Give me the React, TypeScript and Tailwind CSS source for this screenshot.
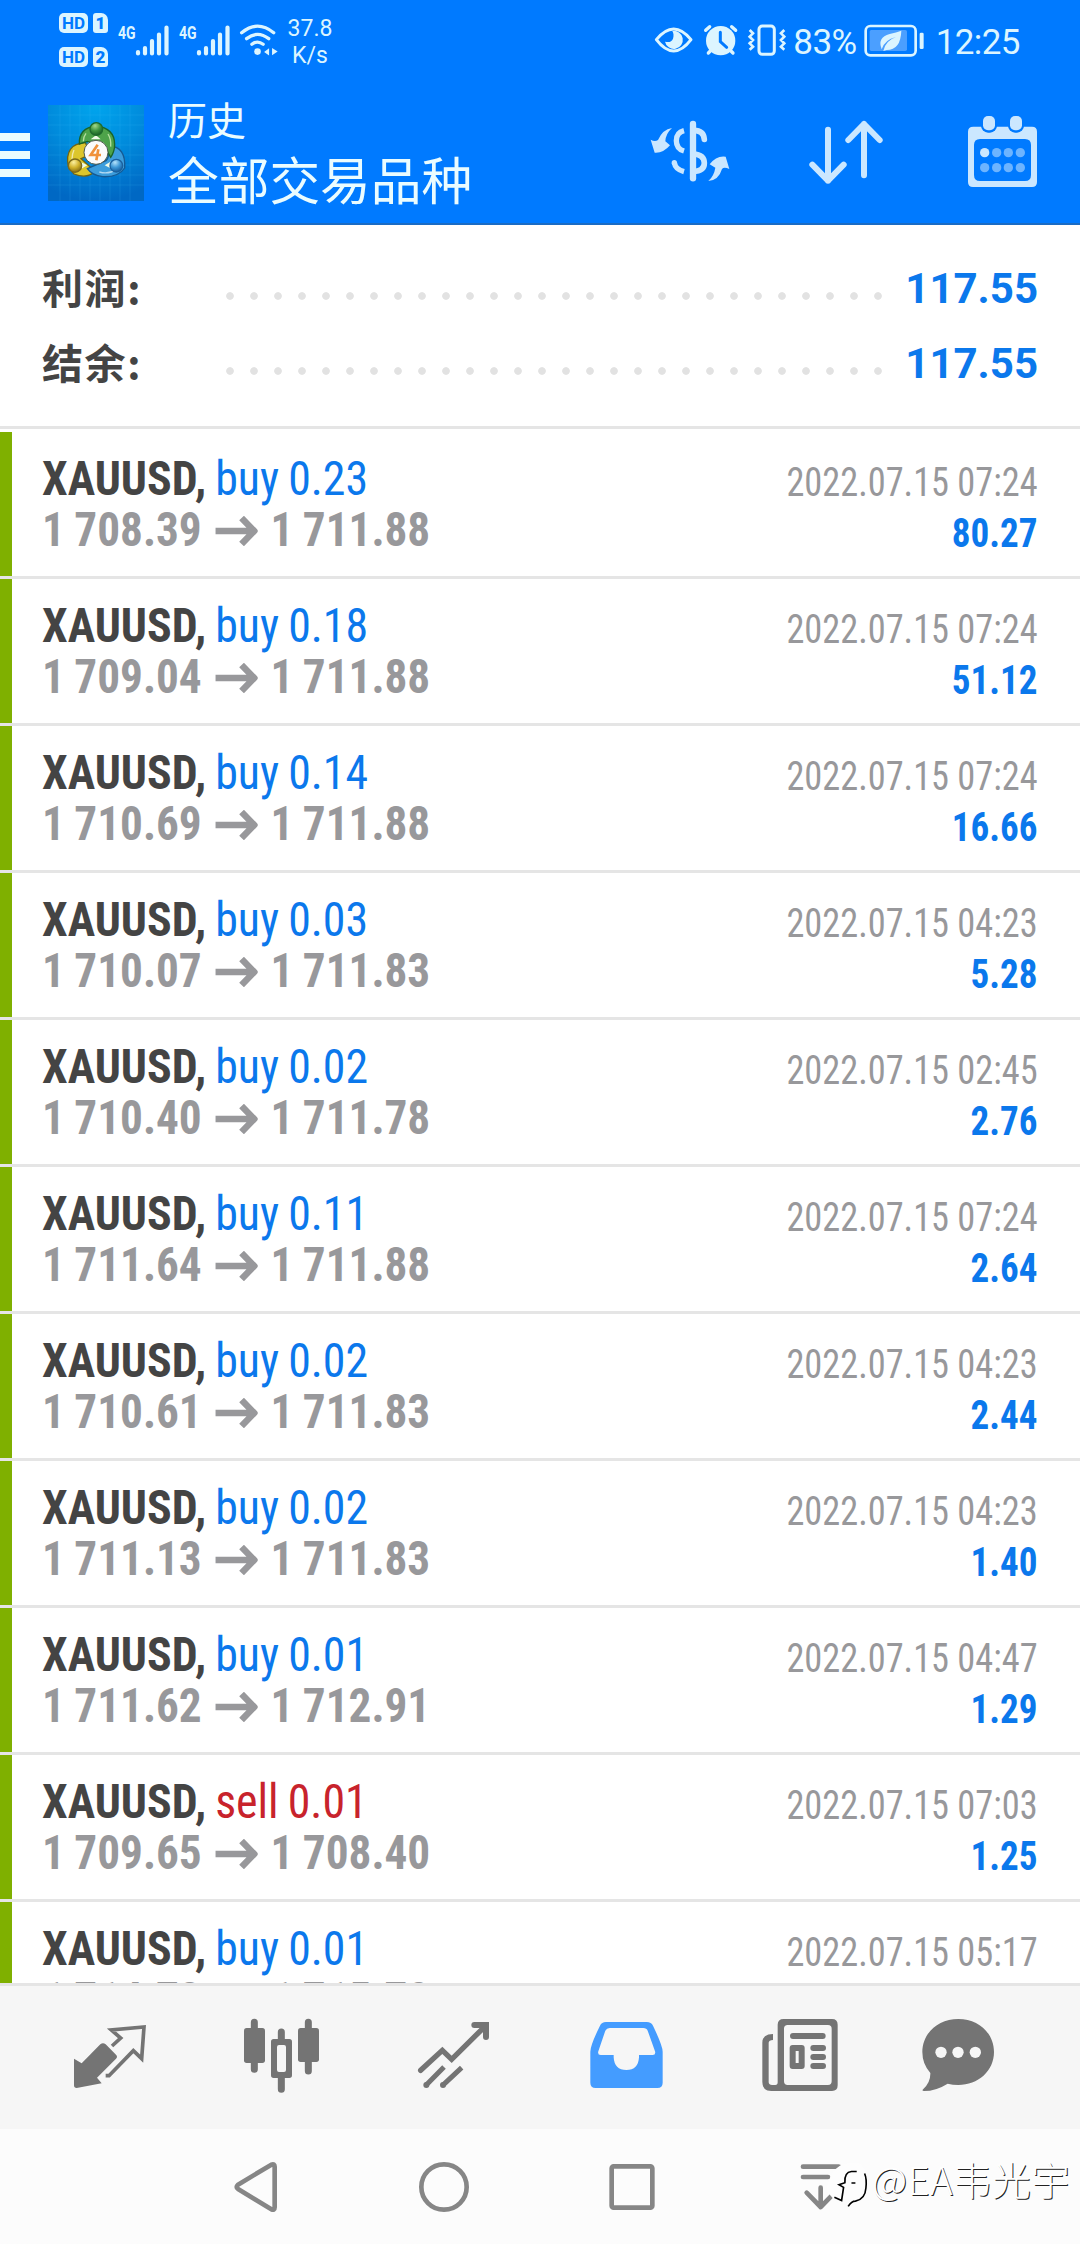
import type { ReactNode } from 'react';

type Deal = {
  side: 'buy' | 'sell';
  volume: string;
  open: string;
  close: string;
  time: string;
  profit: string;
};

const deals: Deal[] = [
  { side: 'buy', volume: '0.23', open: '1 708.39', close: '1 711.88', time: '2022.07.15 07:24', profit: '80.27' },
  { side: 'buy', volume: '0.18', open: '1 709.04', close: '1 711.88', time: '2022.07.15 07:24', profit: '51.12' },
  { side: 'buy', volume: '0.14', open: '1 710.69', close: '1 711.88', time: '2022.07.15 07:24', profit: '16.66' },
  { side: 'buy', volume: '0.03', open: '1 710.07', close: '1 711.83', time: '2022.07.15 04:23', profit: '5.28' },
  { side: 'buy', volume: '0.02', open: '1 710.40', close: '1 711.78', time: '2022.07.15 02:45', profit: '2.76' },
  { side: 'buy', volume: '0.11', open: '1 711.64', close: '1 711.88', time: '2022.07.15 07:24', profit: '2.64' },
  { side: 'buy', volume: '0.02', open: '1 710.61', close: '1 711.83', time: '2022.07.15 04:23', profit: '2.44' },
  { side: 'buy', volume: '0.02', open: '1 711.13', close: '1 711.83', time: '2022.07.15 04:23', profit: '1.40' },
  { side: 'buy', volume: '0.01', open: '1 711.62', close: '1 712.91', time: '2022.07.15 04:47', profit: '1.29' },
  { side: 'sell', volume: '0.01', open: '1 709.65', close: '1 708.40', time: '2022.07.15 07:03', profit: '1.25' },
  { side: 'buy', volume: '0.01', open: '1 714.73', close: '1 715.78', time: '2022.07.15 05:17', profit: '1.05' },
];

const summary = [
  { label: '利润:', value: '117.55' },
  { label: '结余:', value: '117.55' },
];

function SimBadge({ slot }: { slot: string }) {
  return (
    <div className="flex h-5 gap-[5px] text-[#007aff]">
      <span className="flex h-5 w-[29px] items-center justify-center rounded-[5px] bg-[#dcf5ff] text-[17px] leading-none font-bold">
        HD
      </span>
      <span className="flex h-5 w-[15px] items-center justify-center rounded-[3px] rounded-tr-[7px] bg-[#dcf5ff] text-[17px] leading-none font-black">
        {slot}
      </span>
    </div>
  );
}

function Signal() {
  return (
    <div className="relative h-[31px] w-[51px]">
      <span className="absolute top-0 left-0 origin-left scale-x-[0.78] text-[18px] leading-[15px] font-bold">4G</span>
      <svg viewBox="0 0 51 31" className="h-[31px] w-[51px]" stroke="currentColor" strokeWidth="4.2" strokeLinecap="round">
        <path d="M20 27v1.5M27 23v5.5M34 16v12.5M41 9.500v19M48.500 2.500v26" />
      </svg>
    </div>
  );
}

function StatusBar() {
  return (
    <div className="relative flex h-[88px] items-start font-[Roboto] text-[#dcf5ff]">
      <div className="mt-[13px] ml-[59px] flex flex-col gap-[14px]">
        <SimBadge slot="1" />
        <SimBadge slot="2" />
      </div>
      <div className="mt-[25px] ml-[10px] flex gap-[10px]">
        <Signal />
        <Signal />
      </div>
      <svg viewBox="712 66 124 105" className="mt-[22px] ml-[8px] h-[35px] w-[41px]" fill="none" stroke="currentColor" strokeWidth="10" strokeLinecap="round">
        <path d="M723 98Q771 58 820 98M738 116Q771 90 805 116M754 133Q771 120 788 133" />
        <circle cx="771" cy="155" r="10" fill="currentColor" stroke="none" />
        <path d="M791 156l15-11v22zM815 144v22l17-11z" fill="currentColor" stroke="none" />
      </svg>
      <div className="mt-[15px] ml-[7px] w-[48px] text-center text-[23px] leading-[27px] whitespace-nowrap">
        <div>37.8</div>
        <div>K/s</div>
      </div>
      <svg viewBox="40 66 400 110" className="mt-[22px] ml-[319px] h-[36.67px] w-[133.33px]" fill="none" stroke="currentColor">
        <path d="M50 119Q102 55 154 119Q102 187 50 119z" strokeWidth="9" strokeLinejoin="round" />
        <path d="M98 93a27 27 0 1 1-22 32q18 5 24-9q4-13-2-23z" fill="currentColor" stroke="none" />
        <circle cx="243" cy="122" r="44" fill="currentColor" stroke="none" />
        <path d="M242 97v28l19 17" stroke="#007aff" strokeWidth="9" strokeLinecap="round" />
        <path d="M198 91l12-11M288 91l-12-11M206 159l9-9M280 159l-9-9" strokeWidth="10" strokeLinecap="round" />
        <rect x="358" y="78" width="46" height="85" rx="10" strokeWidth="9" />
        <path d="M330 90l10 10-10 10 10 10-10 10 10 10-10 9M434 90l-10 10 10 10-10 10 10 10-10 10 10 9" strokeWidth="8" />
      </svg>
      <span className="mt-[23px] ml-[7px] w-[70px] text-[35px] leading-[40px] tracking-[-0.6px]">83%</span>
      <svg viewBox="670 66 190 110" className="mt-[22px] h-[36.67px] w-[63.33px]" fill="none" stroke="currentColor">
        <rect x="678" y="78" width="150" height="88" rx="14" strokeWidth="8" />
        <rect x="690" y="90" width="112" height="63" rx="5" fill="#4b9fff" stroke="none" />
        <rect x="840" y="98" width="12" height="49" rx="4" fill="currentColor" stroke="none" />
        <path d="M785 92q-2 58-44 58l-10 3q6-31 38-42q-34 8-43 37q-14-36 24-46q20-4 35-10z" fill="currentColor" stroke="none" />
      </svg>
      <span className="mt-[23px] ml-[9px] text-[35px] leading-[40px] tracking-[-0.6px]">12:25</span>
    </div>
  );
}

function AppLogo() {
  return (
    <svg viewBox="144 315 288 288" className="h-24 w-24">
      <defs>
        <radialGradient id="sky" cx="0.5" cy="0" r="1">
          <stop offset="0" stopColor="#00a5ee" />
          <stop offset="0.5" stopColor="#008bdc" />
          <stop offset="1" stopColor="#0068c4" />
        </radialGradient>
        <radialGradient id="greenHead" cx="0.4" cy="0.25" r="0.8">
          <stop offset="0" stopColor="#a6d98a" />
          <stop offset="0.5" stopColor="#3f9440" />
          <stop offset="1" stopColor="#145a22" />
        </radialGradient>
        <radialGradient id="goldHead" cx="0.4" cy="0.25" r="0.8">
          <stop offset="0" stopColor="#fbf0a0" />
          <stop offset="0.5" stopColor="#d2b32c" />
          <stop offset="1" stopColor="#7a6410" />
        </radialGradient>
        <radialGradient id="blueHead" cx="0.4" cy="0.25" r="0.8">
          <stop offset="0" stopColor="#b4e2fb" />
          <stop offset="0.5" stopColor="#3d97d6" />
          <stop offset="1" stopColor="#125596" />
        </radialGradient>
      </defs>
      <rect x="144" y="315" width="288" height="288" fill="url(#sky)" />
      <path
        d="M180 315v288M210 315v288M240 315v288M270 315v288M300 315v288M330 315v288M360 315v288M390 315v288M144 345h288M144 375h288M144 405h288M144 435h288M144 465h288M144 495h288M144 525h288M144 555h288"
        stroke="#4cc2f5"
        strokeOpacity="0.22"
        strokeWidth="2"
      />
      <g strokeWidth="4">
        <path d="M205 500Q192 432 256 428L272 462L243 476L285 514Q262 538 222 522Z" fill="#dcc62c" stroke="#6f6415" />
        <path d="M262 506L318 482Q330 470 328 438Q378 440 374 504Q356 532 308 530Q276 526 262 506Z" fill="#3c9ddc" stroke="#155a94" />
        <path d="M238 432Q236 384 288 378Q344 384 344 434Q344 454 332 472L314 440L262 424Z" fill="#4ea34a" stroke="#1b6428" />
        <path d="M258 400Q250 410 250 424M324 402Q334 418 332 440" fill="none" stroke="#b5dfa0" />
        <path d="M222 450Q216 462 216 478M298 516Q326 524 350 508" fill="none" stroke="#fff" strokeOpacity="0.6" />
        <path d="M272 418l16-12l14 12zM238 484l6 22l18-10zM334 484l-4 20l-16-8z" fill="#effbe8" stroke="none" />
        <circle cx="289" cy="387" r="19" fill="url(#greenHead)" stroke="#1f6a2c" />
        <circle cx="225" cy="497" r="20" fill="url(#goldHead)" stroke="#7b6a1b" />
        <circle cx="349" cy="497" r="19" fill="url(#blueHead)" stroke="#1a609e" />
      </g>
      <circle cx="288" cy="457" r="36" fill="#fbfbfb" stroke="#4d5a4c" strokeWidth="3" />
      <path d="M293 434L272 465H303M295 448L289 481" fill="none" stroke="#f0913c" strokeWidth="8" />
    </svg>
  );
}

function HeaderBar() {
  return (
    <div className="flex h-[135px] items-start font-['Noto_Sans_CJK_SC',sans-serif] text-[#eafcff]">
      <div className="mt-[45px] flex w-[30px] flex-col gap-[10px]">
        <span className="h-2 bg-current" />
        <span className="h-2 bg-current" />
        <span className="h-2 bg-current" />
      </div>
      <div className="mt-[17px] ml-[18px]">
        <AppLogo />
      </div>
      <div className="ml-[24px] w-[482px]">
        <div className="mt-[5px] text-[39px] leading-[50px]">历史</div>
        <div className="mt-[5px] text-[50.7px] leading-[60px]">全部交易品种</div>
      </div>
      <svg viewBox="30 354 243 201" className="mt-[30px] h-[67px] w-[81px]" fill="none" stroke="#cbe7ff">
        <path d="M159 372V535" strokeWidth="19" strokeLinecap="round" />
        <path d="M159 391Q191 390 193 418M159 462Q193 464 193 489Q193 514 159 514" strokeWidth="17" strokeLinecap="round" />
        <path d="M132 392Q109 398 109 422Q109 446 132 453M103 488Q106 508 132 515" strokeWidth="16" />
        <circle cx="103" cy="488" r="8" fill="#cbe7ff" stroke="none" />
        <path d="M96 384Q77 401 76 424L90 436Q70 460 44 458L32 419Q45 427 54 420Q68 388 96 384z" fill="#cbe7ff" stroke="none" />
        <path d="M205 543Q222 528 226 503L209 493Q229 466 257 470L268 507Q252 500 246 507Q236 541 205 543z" fill="#cbe7ff" stroke="none" />
      </svg>
      <svg viewBox="504 354 228 201" className="mt-[30px] ml-[77px] h-[67px] w-[76px]" fill="none" stroke="#cbe7ff" strokeWidth="18" strokeLinecap="round" strokeLinejoin="round">
        <path d="M564 389V542M517 494L564 542L611 494M672 526V372M625 420L672 372L719 420" />
      </svg>
      <svg viewBox="981 345 213 219" className="mt-[27px] ml-[83px] h-[73px] w-[71px]">
        <path d="M1000 380H1176Q1191 380 1191 395V546Q1191 561 1176 561H999Q984 561 984 546V395Q984 380 1000 380zM1020 417Q1002 417 1002 435V525Q1002 543 1020 543H1155Q1173 543 1173 525V435Q1173 417 1155 417z" fill="#cbe7ff" fillRule="evenodd" />
        <rect x="1023" y="342" width="48" height="56" rx="21" fill="#007aff" />
        <rect x="1104" y="342" width="48" height="56" rx="21" fill="#007aff" />
        <rect x="1029" y="348" width="36" height="43" rx="15" fill="#cbe7ff" />
        <rect x="1110" y="348" width="36" height="43" rx="15" fill="#cbe7ff" />
        <g fill="#6db4ff">
          <circle cx="1034" cy="458" r="14" fill="#cbe7ff" />
          <circle cx="1070" cy="458" r="14" />
          <circle cx="1105" cy="458" r="14" />
          <circle cx="1141" cy="458" r="14" />
          <circle cx="1034" cy="503" r="14" />
          <circle cx="1070" cy="503" r="14" />
          <circle cx="1105" cy="503" r="14" />
          <circle cx="1141" cy="503" r="14" />
        </g>
      </svg>
    </div>
  );
}

function Summary() {
  return (
    <section className="h-[204px] shrink-0 border-b-[3px] border-[#e5e5e5] bg-white pt-[27px]">
      {summary.map((line) => (
        <div key={line.label} className="flex h-[75px] items-start pr-[42px] pl-[42px] font-bold">
          <span className="-mt-[3px] w-[176px] font-['Noto_Sans_CJK_SC',sans-serif] text-[41px] leading-[75px] tracking-[1.6px] text-[#444]">
            {line.label}
          </span>
          <span className="mt-[38px] h-3 w-[672px] bg-[radial-gradient(circle,#e2e2e2_3.4px,transparent_4.2px)] bg-[length:24px_12px]" />
          <span className="-mt-[1px] flex-1 text-right font-[Roboto] text-[42px] leading-[75px] text-[#0b78ec]">{line.value}</span>
        </div>
      ))}
    </section>
  );
}

function DealRow({ deal }: { deal: Deal }) {
  return (
    <li className="relative h-[147px] shrink-0 border-b-[3px] border-[#e5e5e5] pt-[21px]">
      <span className="absolute top-0 left-0 h-[144px] w-3 bg-[#7fb000]" />
      <div className="flex justify-between pr-[42px] pl-[42px] leading-[51px] whitespace-nowrap">
        <div className="text-[48px]">
          <div className="origin-left scale-x-[0.955] [word-spacing:-1.500px]">
            <b className="text-[#444]">XAUUSD,</b>{' '}
            <span className={deal.side === 'buy' ? 'text-[#0b78ec]' : 'text-[#c8232c]'}>
              {deal.side} {deal.volume}
            </span>
          </div>
          <div className="flex origin-left scale-x-[0.942] items-center font-bold [word-spacing:-1px] text-[#98989b]">
            {deal.open}
            <svg viewBox="0 0 42 30" preserveAspectRatio="none" className="mx-[14px] mt-[2px] h-[30px] w-[45px]" fill="none" stroke="currentColor" strokeWidth="6.500">
              <path d="M0 15h38M26 2l12.500 13L26 28" />
            </svg>
            {deal.close}
          </div>
        </div>
        <div className="mt-[4px] text-right text-[40px] text-[#98989b]">
          <div className="origin-right scale-x-[0.908]">{deal.time}</div>
          <div className="origin-right scale-x-[0.927] font-bold text-[#0b78ec]">{deal.profit}</div>
        </div>
      </div>
    </li>
  );
}

function Tab({ origin, active, children }: { origin: number; active?: boolean; children: ReactNode }) {
  return (
    <button type="button" className={active ? 'h-[143px] w-[172px] text-[#449cff]' : 'h-[143px] w-[172px] text-[#747474]'}>
      <svg viewBox={`${origin} -42 516 429`} className="h-[143px] w-[172px]" fill="none" stroke="currentColor">
        {children}
      </svg>
    </button>
  );
}

function TabBar() {
  return (
    <nav className="flex h-[146px] shrink-0 border-t-[3px] border-[#e5e5e5] bg-[#f6f6f6] px-6">
      <Tab origin={-108}>
        <path d="M42 176L65 190L121 133Q129 126 137 133L168 164Q174 170 168 176L111 233L125 250L50 264Q42 264 42 256z" fill="currentColor" stroke="none" />
        <path d="M156 138L182 114L154 90L252 81L245 176L220 152L147 227L137 227" strokeWidth="11" />
      </Tab>
      <Tab origin={408}>
        <path d="M583 67V208M745 67V213M664 96V120M664 230V268" strokeWidth="21" strokeLinecap="round" />
        <rect x="552" y="84" width="63" height="105" rx="8" fill="currentColor" stroke="none" />
        <rect x="714" y="84" width="63" height="102" rx="8" fill="currentColor" stroke="none" />
        <path d="M641 117H688Q696 117 696 125V226Q696 234 688 234H641Q633 234 633 226V125Q633 117 641 117zM657 135Q651 135 651 141V210Q651 216 657 216H672Q678 216 678 210V141Q678 135 672 135z" fill="currentColor" fillRule="evenodd" stroke="none" />
      </Tab>
      <Tab origin={924}>
        <path d="M1082 211L1147 151L1175 178L1278 76" strokeWidth="16" strokeLinecap="round" />
        <path d="M1243 75H1278V111" strokeWidth="18" strokeLinecap="round" />
        <path d="M1152 201L1098 256M1205 203L1148 256" strokeWidth="15" />
        <path d="M1099 255v.1M1149 255v.1" strokeWidth="18" strokeLinecap="round" />
      </Tab>
      <Tab origin={-120} active>
        <path d="M78 66H200Q214 66 219 77Q248 138 248 155V248Q248 264 232 264H47Q31 264 31 248V155Q31 136 60 77Q65 66 78 66zM89 84Q80 84 76 92L55 154Q52 165 62 165H101V172Q103 210 139 210Q175 210 177 172V165H218Q228 165 225 154L203 92Q200 84 190 84z" fill="currentColor" fillRule="evenodd" stroke="none" />
      </Tab>
      <Tab origin={396}>
        <path d="M611 57H756Q773 57 773 74V256Q773 273 756 273H574Q547 273 547 246V128Q547 102 579 102V120Q567 120 566 128V247Q567 255 576 255H586Q593 255 593 247V74Q593 57 611 57zM623 75Q612 75 612 86V244Q612 255 623 255H744Q755 255 755 244V86Q755 75 744 75z" fill="currentColor" fillRule="evenodd" stroke="none" />
        <path d="M639 108H728M700 144H729M700 171H729M700 198H729" strokeWidth="18" strokeLinecap="round" />
        <path d="M638 135H665Q674 135 674 144V198Q674 207 665 207H638Q629 207 629 198V144Q629 135 638 135zM647 153V189H656V153z" fill="currentColor" fillRule="evenodd" stroke="none" />
      </Tab>
      <Tab origin={912}>
        <path d="M1135 57C1196 57 1242 100 1242 156C1242 213 1194 255 1135 255Q1118 255 1103 251Q1068 273 1032 273Q1024 272 1030 267Q1052 247 1051 219Q1027 192 1027 156C1027 100 1074 57 1135 57z" fill="currentColor" stroke="none" />
        <g fill="#f6f6f6" stroke="none">
          <circle cx="1083" cy="157" r="17" />
          <circle cx="1134" cy="157" r="17" />
          <circle cx="1186" cy="157" r="17" />
        </g>
      </Tab>
    </nav>
  );
}

function NavKey({ origin, children }: { origin: number; children: ReactNode }) {
  return (
    <svg viewBox={`${origin} 387 564 345`} className="h-[115px] w-[188px]" fill="none" stroke="#868686" strokeWidth="14" strokeLinejoin="round">
      {children}
    </svg>
  );
}

function SystemNav() {
  return (
    <div className="relative flex h-[115px] shrink-0 bg-[#fcfcfc] pl-[162px]">
      <NavKey origin={306}>
        <path d="M634 494Q644 490 644 500V622Q644 632 634 628L534 567Q526 561 534 554z" />
      </NavKey>
      <NavKey origin={870}>
        <circle cx="1152" cy="561" r="68" />
      </NavKey>
      <NavKey origin={-126}>
        <rect x="95" y="499" width="122" height="124" rx="6" />
      </NavKey>
      <NavKey origin={438}>
        <path d="M669 500H776M669 531H744M722 563V620M680 578L722 621L764 578" strokeLinecap="round" />
      </NavKey>
      <div className="absolute top-[34px] left-[827px] flex items-start">
        <svg viewBox="20 70 130 140" className="h-[46px] w-[43px]" fill="none">
          <path d="M36 100Q62 62 116 70Q146 86 141 150Q134 180 88 200L92 176L64 184L38 178L14 150z" fill="#fdfdfd" />
          <path d="M42 174L64 184L70 144L56 136L74 130Q72 98 94 96L110 96M94 131L106 131" stroke="#000" strokeWidth="5" />
          <path d="M84 202Q94 186 106 186Q136 180 138 146Q141 118 134 102" stroke="#000" strokeWidth="5" />
        </svg>
        <span className="-mt-[8px] ml-[2px] font-['Noto_Sans_CJK_SC',sans-serif] text-[38.500px] leading-[46px] font-light tracking-[0.5px] whitespace-nowrap text-white [text-shadow:1px_1px_0_#222]">
          @EA韦光宇
        </span>
      </div>
    </div>
  );
}

export default function App() {
  return (
    <div className="flex h-[2244px] w-[1080px] flex-col overflow-hidden bg-white">
      <header className="h-[225px] shrink-0 border-b-2 border-[#1b6cc4] bg-[#007aff]">
        <StatusBar />
        <HeaderBar />
      </header>
      <Summary />
      <ul className="flex min-h-0 flex-1 flex-col overflow-hidden pt-[3px] font-['Roboto_Condensed',Roboto,sans-serif] [font-stretch:75%]">
        {deals.map((deal, index) => (
          <DealRow key={index} deal={deal} />
        ))}
      </ul>
      <TabBar />
      <SystemNav />
    </div>
  );
}
